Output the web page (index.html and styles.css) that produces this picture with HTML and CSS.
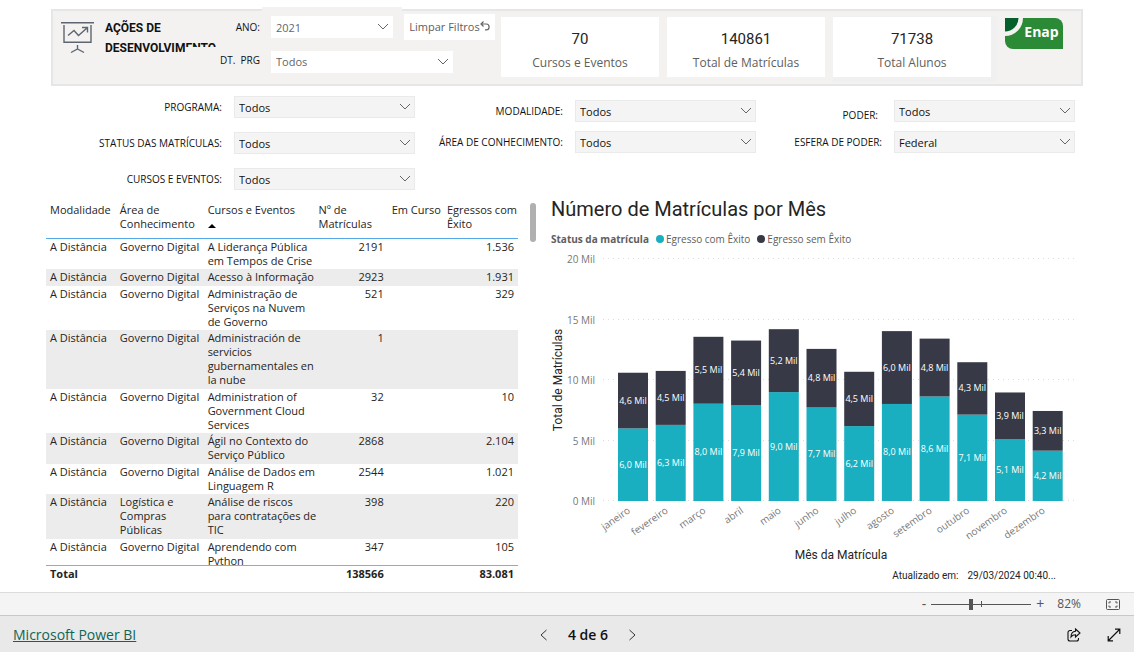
FILE: index.html
```html
<!DOCTYPE html>
<html lang="pt-BR">
<head>
<meta charset="utf-8">
<meta name="viewport" content="width=device-width, initial-scale=1">
<title>Ações de Desenvolvimento</title>
<link rel="stylesheet" href="styles.css">
</head>
<body>
<svg class="defs" width="0" height="0" aria-hidden="true">
  <symbol id="chevron" viewBox="0 0 12 7"><path d="M1 1l5 5 5-5" fill="none" stroke="currentColor"/></symbol>
</svg>
<main class="report">
  <header class="banner">
    <svg class="banner-icon" viewBox="0 0 33 34" fill="none" stroke="#5d6670" stroke-width="1.4">
      <path d="M0 1.700h33M3 4v17.200h27V4M7 14.500l6-5 4.500 5L26 7M21 6.500h5.500v5M16.500 24v4M10 31.500l6.500-3.500 6.500 3.500"/>
    </svg>
    <h1 class="banner-title">AÇÕES DE<br>DESENVOLVIMENTO</h1>
    <form class="slicers">
      <label class="slicer-label" for="ano">ANO:</label>
      <div class="select select-light select-ano"><select id="ano"><option>2021</option></select><svg><use href="#chevron"/></svg></div>
      <button class="clear" type="button">Limpar Filtros<svg viewBox="0 0 10 10" fill="none" stroke="#666" stroke-width="1.200"><path d="M3.500.5L1 3l2.500 2.500M1 3h5.200a2.900 2.900 0 0 1 0 5.800H5"/></svg></button>
      <label class="slicer-label slicer-label-prg" for="prg">DT. &nbsp;PRG</label>
      <div class="select select-light select-prg"><select id="prg"><option>Todos</option></select><svg><use href="#chevron"/></svg></div>
    </form>
    <div class="kpis">
      <div class="kpi"><strong>70</strong><span>Cursos e Eventos</span></div>
      <div class="kpi"><strong>140861</strong><span>Total de Matrículas</span></div>
      <div class="kpi kpi-framed"><strong>71738</strong><span>Total Alunos</span></div>
    </div>
    <svg class="logo" viewBox="0 0 58 31" role="img" aria-label="Enap">
      <path d="M0 0h50a8 8 0 0 1 8 8v23H8a8 8 0 0 1-8-8z" fill="#2b8a36"/>
      <path d="M0 0h18A18 18 0 0 1 0 18z" fill="#f3f2f1"/>
      <path d="M0 0h13.500A13.500 13.500 0 0 1 0 13.500z" fill="#045f2d"/>
      <text x="36.500" y="19" class="logo-text">Enap</text>
    </svg>
  </header>

  <form class="filters">
    <div class="filter-col filter-col-first">
      <div class="filter"><label for="f1">PROGRAMA:</label><div class="select"><select id="f1"><option>Todos</option></select><svg><use href="#chevron"/></svg></div></div>
      <div class="filter"><label for="f2">STATUS DAS MATRÍCULAS:</label><div class="select"><select id="f2"><option>Todos</option></select><svg><use href="#chevron"/></svg></div></div>
      <div class="filter"><label for="f3">CURSOS E EVENTOS:</label><div class="select"><select id="f3"><option>Todos</option></select><svg><use href="#chevron"/></svg></div></div>
    </div>
    <div class="filter-col">
      <div class="filter"><label for="f4">MODALIDADE:</label><div class="select"><select id="f4"><option>Todos</option></select><svg><use href="#chevron"/></svg></div></div>
      <div class="filter"><label for="f5">ÁREA DE CONHECIMENTO:</label><div class="select"><select id="f5"><option>Todos</option></select><svg><use href="#chevron"/></svg></div></div>
    </div>
    <div class="filter-col">
      <div class="filter"><label class="label-low" for="f6">PODER:</label><div class="select"><select id="f6"><option>Todos</option></select><svg><use href="#chevron"/></svg></div></div>
      <div class="filter"><label for="f7">ESFERA DE PODER:</label><div class="select"><select id="f7"><option>Federal</option></select><svg><use href="#chevron"/></svg></div></div>
    </div>
  </form>

  <div class="panels">
    <div class="table-scroll">
      <table class="courses">
        <colgroup><col class="c-mod"><col class="c-area"><col class="c-curso"><col class="c-mat"><col class="c-em"><col class="c-egr"></colgroup>
        <thead>
          <tr><th>Modalidade</th><th>Área de<br>Conhecimento</th><th>Cursos e Eventos<span class="sort"></span></th><th>Nº de<br>Matrículas</th><th class="num">Em Curso</th><th>Egressos com<br>Êxito</th></tr>
        </thead>
        <tbody>
          <tr><td>A Distância</td><td>Governo Digital</td><td>A Liderança Pública<br>em Tempos de Crise</td><td class="num">2191</td><td></td><td class="num">1.536</td></tr>
          <tr><td>A Distância</td><td>Governo Digital</td><td>Acesso à Informação</td><td class="num">2923</td><td></td><td class="num">1.931</td></tr>
          <tr><td>A Distância</td><td>Governo Digital</td><td>Administração de<br>Serviços na Nuvem<br>de Governo</td><td class="num">521</td><td></td><td class="num">329</td></tr>
          <tr><td>A Distância</td><td>Governo Digital</td><td>Administración de<br>servicios<br>gubernamentales en<br>la nube</td><td class="num">1</td><td></td><td></td></tr>
          <tr><td>A Distância</td><td>Governo Digital</td><td>Administration of<br>Government Cloud<br>Services</td><td class="num">32</td><td></td><td class="num">10</td></tr>
          <tr><td>A Distância</td><td>Governo Digital</td><td>Ágil no Contexto do<br>Serviço Público</td><td class="num">2868</td><td></td><td class="num">2.104</td></tr>
          <tr><td>A Distância</td><td>Governo Digital</td><td>Análise de Dados em<br>Linguagem R</td><td class="num">2544</td><td></td><td class="num">1.021</td></tr>
          <tr><td>A Distância</td><td>Logística e<br>Compras<br>Públicas</td><td>Análise de riscos<br>para contratações de<br>TIC</td><td class="num">398</td><td></td><td class="num">220</td></tr>
          <tr><td>A Distância</td><td>Governo Digital</td><td>Aprendendo com<br>Python</td><td class="num">347</td><td></td><td class="num">105</td></tr>
        </tbody>
        <tfoot>
          <tr><td>Total</td><td></td><td></td><td class="num">138566</td><td></td><td class="num">83.081</td></tr>
        </tfoot>
      </table>
    </div>
    <div class="scroll-thumb"></div>
    <section class="chart">
      <h2 class="chart-title">Número de Matrículas por Mês</h2>
      <div class="legend"><b>Status da matrícula</b><span class="key key-com">Egresso com Êxito</span><span class="key key-sem">Egresso sem Êxito</span></div>
      <svg class="plot" id="plot" viewBox="0 0 536 316" role="img" aria-label="Número de Matrículas por Mês"></svg>
      <p class="updated"><span>Atualizado em:</span><span>29/03/2024 00:40...</span></p>
    </section>
  </div>
</main>

<div class="zoombar">
  <button type="button" aria-label="Diminuir zoom">-</button>
  <div class="slider"><input type="range" min="0" max="100" value="39" aria-label="Zoom"><span class="slider-mark"></span></div>
  <button type="button" aria-label="Aumentar zoom">+</button>
  <span class="zoom-value">82%</span>
  <button class="fit" type="button" aria-label="Ajustar à página"><svg width="14" height="11" viewBox="0 0 14 11" fill="none" stroke="#555"><rect x=".5" y=".5" width="13" height="10" rx="1"/><path d="M5 3H3v1.500M3 6.500V8h2M9 3h2v1.500M11 6.500V8H9"/></svg></button>
</div>
<footer class="navbar">
  <a href="#">Microsoft Power BI</a>
  <nav class="pager">
    <button type="button" aria-label="Página anterior"><svg width="7" height="12" viewBox="0 0 7 12" fill="none" stroke="#333"><path d="M6.500 1L1 6l5.500 5"/></svg></button>
    <span>4 de 6</span>
    <button type="button" aria-label="Próxima página"><svg width="7" height="12" viewBox="0 0 7 12" fill="none" stroke="#333"><path d="M.5 1L6 6 .5 11"/></svg></button>
  </nav>
  <div class="actions">
    <button type="button" aria-label="Compartilhar"><svg width="14" height="14" viewBox="0 0 14 14" fill="none" stroke="#111" stroke-width="1.100"><path d="M5 2.500H3a2 2 0 0 0-2 2V11a2 2 0 0 0 2 2h6.500a2 2 0 0 0 2-2v-1"/><path d="M8.500 1l4.500 4-4.500 4V6.800C6.500 6.800 5 7.500 4 9c0-3 1.500-5.500 4.500-5.700z"/></svg></button>
    <button type="button" aria-label="Tela inteira"><svg width="14" height="14" viewBox="0 0 14 14" fill="none" stroke="#111" stroke-width="1.200"><path d="M1.500 12.500l11-11M8 1.200h4.800V6M1.200 8v4.800H6"/></svg></button>
  </div>
</footer>
<script src="chart.js"></script>
</body>
</html>
```

FILE: styles.css
```css
* { box-sizing: border-box; }

body {
  margin: 0;
  min-height: 100vh;
  display: flex;
  flex-direction: column;
  background: #fff;
  color: #252423;
  font: 11px/14px "Open Sans", "Noto Sans", sans-serif;
}

button, select { font: inherit; color: inherit; }
button { padding: 0; border: 0; background: none; }
.defs { position: absolute; }

.report { flex: 1; padding-top: 9px; }

/* Banner */
.banner {
  display: flex;
  align-items: flex-start;
  height: 77px;
  margin: 0 51px;
  padding: 5px 18px 0 8px;
  border: 2px solid #e6e6e6;
  background: #f3f2f1;
}
.banner-icon { width: 33px; height: 34px; margin: 5px 11px 0 0; flex: none; }
.banner-title {
  width: 80px;
  margin: 2px 0 0;
  flex: none;
  font: 700 12px/20px Roboto, sans-serif;
  color: #111;
  white-space: nowrap;
}
.slicers {
  display: grid;
  grid-template-columns: 75px 122px 91px;
  grid-template-rows: 22px 29px;
  column-gap: 11px;
  row-gap: 9px;
  flex: none;
  position: relative;
}
.slicer-label { align-self: center; text-align: right; font-size: 10px; color: #111; white-space: nowrap; }
.slicer-label-prg { align-self: stretch; padding-top: 6px; background: #f3f2f1; }
.select-ano { box-shadow: 0 0 0 9px #f3f2f1; }
.select-prg { grid-column: 2 / 4; width: 182px; align-self: center; }
.clear {
  align-self: center;
  height: 26px;
  background: #fff;
  color: #605e5c;
  white-space: nowrap;
  position: relative;
}
.clear svg { width: 10px; height: 10px; }

.kpis { flex: 1; display: grid; grid-template-columns: repeat(3, 1fr); gap: 8px; margin: 1px 14px 0 6px; }
.kpi {
  height: 60px;
  padding-top: 12px;
  display: flex;
  flex-direction: column;
  align-items: center;
  gap: 4px;
  background: #fff;
  white-space: nowrap;
}
.kpi-framed { box-shadow: 3px 2px 0 3px #f0f0f0; }
.kpi strong { font: 400 15px/20px Roboto, sans-serif; }
.kpi span { font-size: 12px; line-height: 20px; color: #605e5c; }
.logo { width: 58px; height: 31px; margin-top: 2px; flex: none; }
.logo-text { font: bold 14px "Open Sans", sans-serif; fill: #fff; text-anchor: middle; }

/* Drop-downs */
.select { position: relative; height: 22px; }
.select select {
  appearance: none;
  width: 100%;
  height: 100%;
  padding: 1px 24px 0 4px;
  border: 1px solid #eaeaea;
  border-radius: 0;
  background: #f4f4f4;
  color: #111;
}
.select svg { position: absolute; right: 4px; top: 7px; width: 12px; height: 7px; color: #666; pointer-events: none; }
.select-light select { border-color: #fff; background: #fff; color: #666; }

.filters {
  display: grid;
  grid-template-columns: 364fr 341fr 319fr;
  margin: 10px 59px 10px 51px;
}
.filter-col { display: flex; flex-direction: column; gap: 9px; padding-top: 4px; }
.filter-col-first { gap: 14px; padding-top: 0; }
.filter { display: grid; grid-template-columns: 1fr 181px; column-gap: 12px; align-items: center; }
.filter label { text-align: right; font-size: 10px; color: #111; white-space: nowrap; }
.filter .label-low { padding: 8px 4px 0 0; }

/* Table */
.panels { display: flex; align-items: flex-start; padding: 0 51px 0 46px; }
.table-scroll { flex: 472; min-width: 0; max-height: 383px; overflow: hidden; }
.courses { width: 100%; table-layout: fixed; border-collapse: separate; border-spacing: 0; }
.c-mod { width: 14.800%; }
.c-area { width: 18.600%; }
.c-curso { width: 23.500%; }
.c-mat { width: 15.500%; }
.c-em { width: 11.700%; }
.c-egr { width: 15.900%; }
.courses th { height: 39px; padding: 3px 0 2px 4px; text-align: left; font-weight: 400; vertical-align: top; border-bottom: 1px solid #53a8e8; white-space: nowrap; }
.courses td { padding: 1px 4px; vertical-align: top; white-space: nowrap; }
.courses tbody tr:nth-child(even) td { padding-bottom: 2px; background: #ececec; }
.courses .num { text-align: right; }
.courses th.num { padding-right: 4px; }
.courses tfoot td { position: sticky; bottom: 0; height: 18px; background: #fff; border-top: 1px solid #6fb4ee; font-weight: 700; }
.sort { display: block; width: 0; margin-top: 7px; border: 4px solid transparent; border-top: 0; border-bottom-color: #000; }
.scroll-thumb { flex: none; width: 6px; height: 39px; margin: 3px 11px 0 12px; border-radius: 3px; background: #b0b0b0; }

/* Chart */
.chart { flex: 536; min-width: 0; }
.chart-title { margin: 0 0 0 4px; font: 400 20px/18px Roboto, sans-serif; white-space: nowrap; }
.legend { display: flex; gap: 7px; margin: 14px 0 4px 4px; color: #605e5c; font-size: 10px; white-space: nowrap; }
.key { display: flex; align-items: center; gap: 2px; }
.key::before { content: ""; width: 8px; height: 8px; border-radius: 50%; }
.key-com::before { background: #1aafc0; }
.key-sem::before { background: #373a46; }
.plot { display: block; width: 100%; }
.grid { stroke: #dcdcdc; stroke-dasharray: 1 4; }
.bar-com { fill: #1aafc0; }
.bar-sem { fill: #373a46; }
.bar-value { font-size: 9px; fill: #fff; text-anchor: middle; }
.tick { font-size: 10px; fill: #777; text-anchor: end; }
.axis-title { font: 400 12px Roboto, sans-serif; fill: #252423; text-anchor: middle; }
.updated { display: flex; justify-content: flex-end; gap: 9px; margin: 3px 27px 0 0; font: 10px/14px Roboto, sans-serif; }

/* Bottom bars */
.zoombar {
  display: flex;
  align-items: center;
  justify-content: flex-end;
  height: 23px;
  padding-right: 14px;
  border-top: 1px solid #dcdcdc;
  background: #f4f4f4;
  color: #555;
  font-size: 14px;
}
.slider { position: relative; display: flex; margin: 0 5px; }
.slider input { appearance: none; width: 100px; height: 12px; margin: 0; background: linear-gradient(#555, #555) center / 100% 1px no-repeat; }
.slider input::-webkit-slider-thumb { appearance: none; width: 4px; height: 11px; background: #555; }
.slider-mark { position: absolute; left: 50%; top: 3px; width: 1px; height: 6px; background: #555; }
.zoom-value { margin: 0 25px 0 13px; font-size: 12px; }
.fit { display: flex; }

.navbar {
  display: grid;
  grid-template-columns: 1fr auto 1fr;
  align-items: center;
  height: 37px;
  padding: 2px 13px 0;
  border-top: 1px solid #c8c8c8;
  background: #e9e9e9;
  font-size: 14px;
  line-height: 20px;
}
.navbar a { justify-self: start; color: #0f6556; }
.navbar button, .pager { display: flex; align-items: center; }
.pager { gap: 21px; margin-left: 42px; font-weight: 600; color: #111; }
.actions { display: flex; justify-content: flex-end; gap: 26px; }
```

FILE: chart.js
```js
const months = [
  ["janeiro", 6.0, 4.6], ["fevereiro", 6.29, 4.46], ["março", 8.04, 5.53],
  ["abril", 7.9, 5.36], ["maio", 9.0, 5.2], ["junho", 7.73, 4.84],
  ["julho", 6.19, 4.49], ["agosto", 8.02, 6.02], ["setembro", 8.64, 4.78],
  ["outubro", 7.14, 4.33], ["novembro", 5.09, 3.88], ["dezembro", 4.16, 3.28]
];
const plot = document.getElementById("plot");
const base = 251, scale = 12.1, left = 71, pitch = 37.7, width = 30;

function add(name, attrs, text) {
  const el = document.createElementNS("http://www.w3.org/2000/svg", name);
  for (const key in attrs) el.setAttribute(key, attrs[key]);
  if (text) el.textContent = text;
  plot.appendChild(el);
}
const label = v => v.toFixed(1).replace(".", ",") + " Mil";

for (let v = 0; v <= 20; v += 5) {
  const y = Math.round(base - v * scale) - 0.5;
  add("line", { class: "grid", x1: 56, x2: 531, y1: y, y2: y });
  add("text", { class: "tick", x: 48, y: y + 4 }, v + " Mil");
}
months.forEach(([month, com, sem], i) => {
  const x = left + i * pitch, mid = x + width / 2;
  const split = base - com * scale, top = split - sem * scale;
  add("rect", { class: "bar-com", x, y: split, width, height: com * scale });
  add("rect", { class: "bar-sem", x, y: top, width, height: sem * scale });
  add("text", { class: "bar-value", x: mid, y: (split + base) / 2 + 3 }, label(com));
  add("text", { class: "bar-value", x: mid, y: (split + top) / 2 + 3 }, label(sem));
  const tx = mid - 2, ty = base + 11;
  add("text", { class: "tick", x: tx, y: ty, transform: `rotate(-35 ${tx} ${ty})` }, month);
});
add("text", { class: "axis-title", x: 15, y: 130, transform: "rotate(-90 15 130)" }, "Total de Matrículas");
add("text", { class: "axis-title", x: 294, y: 309 }, "Mês da Matrícula");
```
